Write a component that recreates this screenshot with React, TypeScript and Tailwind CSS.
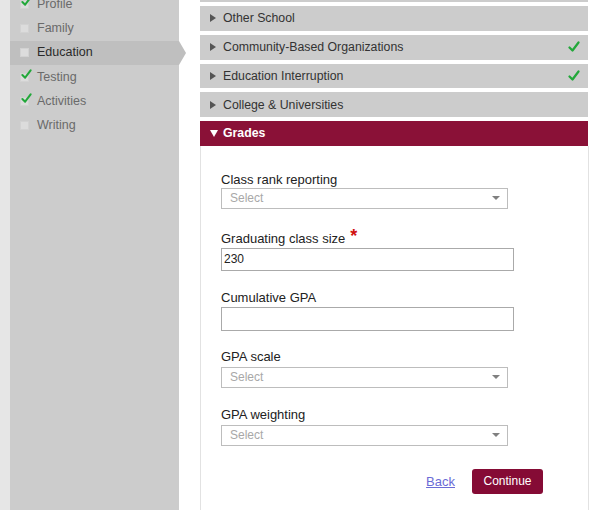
import React from 'react';

const sideItems = [
  { label: 'Profile', checked: true },
  { label: 'Family', checked: false },
  { label: 'Education', checked: false, active: true },
  { label: 'Testing', checked: true },
  { label: 'Activities', checked: true },
  { label: 'Writing', checked: false },
];

const sections = [
  { label: 'Other School', done: false },
  { label: 'Community-Based Organizations', done: true },
  { label: 'Education Interruption', done: true },
  { label: 'College & Universities', done: false },
];

function GreenCheck({ className }: { className?: string }) {
  return (
    <svg viewBox="0 0 12 12" className={className}>
      <path d="M1.5 6.5 L4.5 9.5 L10.5 1.5" fill="none" stroke="#22a83a" strokeWidth="2.2" strokeLinecap="round" strokeLinejoin="round" />
    </svg>
  );
}

function SideBox({ checked }: { checked: boolean }) {
  return (
    <div className="relative w-[9px] h-[9px] bg-[#dcdcdc] border border-[#d2d2d2] shrink-0">
      {checked && <GreenCheck className="absolute left-0 -top-[5px] w-[11px] h-[11px]" />}
    </div>
  );
}

function SelectBox({ w }: { w: string }) {
  return (
    <div className={`${w} h-[21px] border border-[#bdbdbd] bg-white flex items-center justify-between pl-[8px] pr-[7px]`}>
      <span className="text-[12px] text-[#a8a8a8]">Select</span>
      <span className="w-0 h-0 border-l-[4px] border-r-[4px] border-t-[4px] border-l-transparent border-r-transparent border-t-[#808080]" />
    </div>
  );
}

export default function App() {
  return (
    <div className="w-[600px] h-[510px] overflow-hidden flex bg-white" style={{ fontFamily: '"Liberation Sans", Arial, sans-serif' }}>
      <div className="w-[10px] bg-[#e6e6e6] shrink-0" />
      <div className="w-[169px] bg-[#cccccc] shrink-0">
        <ul className="-mt-[8px]">
          {sideItems.map((item) => (
            <li
              key={item.label}
              className={`relative h-[24.3px] flex items-center pl-[10px] gap-[8px] ${item.active ? 'bg-[#bfbfbf]' : ''}`}
            >
              <SideBox checked={item.checked} />
              <span className={`text-[12.5px] ${item.active ? 'text-[#2a2a2a]' : 'text-[#6a6a6a]'}`}>{item.label}</span>
              {item.active && (
                <span className="absolute -right-[7px] top-0 w-0 h-0 border-t-[12px] border-b-[12px] border-l-[7px] border-t-transparent border-b-transparent border-l-[#bfbfbf]" />
              )}
            </li>
          ))}
        </ul>
      </div>
      <div className="w-[21px] shrink-0" />
      <div className="w-[389px] shrink-0 flex flex-col">
        <div className="flex flex-col gap-[4px]">
          <div className="h-[2px] bg-[#cccccc] mr-[1px]" />
          {sections.map((s) => (
            <div key={s.label} className="h-[24.8px] bg-[#cccccc] mr-[1px] flex items-center pl-[10px] pr-[8px] text-[12.3px] text-[#333333]">
              <span className="w-0 h-0 border-t-[4px] border-b-[4px] border-l-[6px] border-t-transparent border-b-transparent border-l-[#555555] mr-[7px]" />
              <span className="flex-1">{s.label}</span>
              {s.done && <GreenCheck className="w-[12px] h-[12px]" />}
            </div>
          ))}
          <div className="h-[24.8px] bg-[#8a1137] mr-[1px] flex items-center pl-[10px] text-[12.3px] font-bold text-white">
            <span className="w-0 h-0 border-l-[4px] border-r-[4px] border-t-[7px] border-l-transparent border-r-transparent border-t-white mr-[5px]" />
            Grades
          </div>
        </div>
        <div className="flex-1 border-l border-r border-[#e2e2e2] pl-[20px] pt-[26px] text-[13px] text-[#222222]">
          <div className="leading-[15px] mb-[1px]">Class rank reporting</div>
          <SelectBox w="w-[287px]" />

          <div className="leading-[15px] mt-[22px] mb-[2px] flex items-start">
            Graduating class size
            <span className="text-[#d01010] text-[18px] font-bold leading-[12px] ml-[5px] -mt-[1px]">*</span>
          </div>
          <div className="w-[293px] h-[23px] border border-[#aaaaaa] flex items-center pl-[2px] text-[12px] text-[#222222]">230</div>

          <div className="leading-[15px] mt-[19px] mb-[2px]">Cumulative GPA</div>
          <div className="w-[293px] h-[24px] border border-[#aaaaaa]" />

          <div className="leading-[15px] mt-[18px] mb-[3px]">GPA scale</div>
          <SelectBox w="w-[287px]" />

          <div className="leading-[15px] mt-[19px] mb-[3px]">GPA weighting</div>
          <SelectBox w="w-[287px]" />

          <div className="flex justify-end items-center gap-[17px] mt-[23px] pr-[45px]">
            <a href="#" className="text-[13px] text-[#6b6bd6] underline">Back</a>
            <button className="w-[71px] h-[25px] rounded-[3px] bg-[#850b35] text-white text-[12px]">Continue</button>
          </div>
        </div>
      </div>
    </div>
  );
}
